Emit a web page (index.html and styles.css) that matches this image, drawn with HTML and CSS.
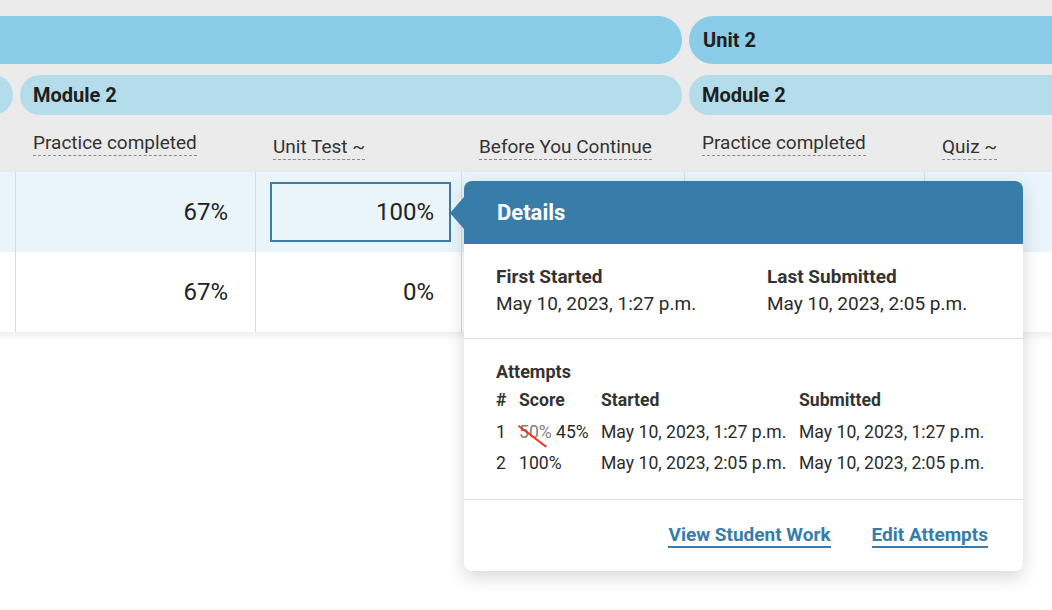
FILE: index.html
```html
<!doctype html>
<html>
<head>
<meta charset="utf-8">
<title>Gradebook</title>
<link rel="stylesheet" href="styles.css">
</head>
<body>
<div class="board">
  <div class="scroller">
    <div class="head">
      <div class="cols units">
        <div class="pill unit span-a"></div>
        <div class="pill unit span-b">Unit 2</div>
      </div>
      <div class="cols modules">
        <div class="pill module"></div>
        <div class="pill module span-m">Module 2</div>
        <div class="pill module span-b">Module 2</div>
      </div>
      <div class="cols labels">
        <div class="label"></div>
        <div class="label low"><span>Practice completed</span></div>
        <div class="label"><span>Unit Test ~</span></div>
        <div class="label"><span>Before You Continue</span></div>
        <div class="label low"><span>Practice completed</span></div>
        <div class="label"><span>Quiz ~</span></div>
      </div>
    </div>
    <div class="rows">
      <div class="cols row active">
        <div class="cell"></div>
        <div class="cell"><span class="score">67%</span></div>
        <div class="cell"><span class="score focus">100%</span></div>
        <div class="cell"></div>
        <div class="cell"></div>
        <div class="cell"></div>
      </div>
      <div class="cols row">
        <div class="cell"></div>
        <div class="cell"><span class="score">67%</span></div>
        <div class="cell"><span class="score">0%</span></div>
        <div class="cell"></div>
        <div class="cell"></div>
        <div class="cell"></div>
      </div>
    </div>
  </div>

  <div class="popover">
    <div class="pop-head">Details</div>
    <div class="pop-dates">
      <b>First Started</b>
      <b>Last Submitted</b>
      <span>May 10, 2023, 1:27 p.m.</span>
      <span>May 10, 2023, 2:05 p.m.</span>
    </div>
    <div class="pop-attempts">
      <div class="att-title">Attempts</div>
      <div class="att-grid">
        <b>#</b><b>Score</b><b>Started</b><b>Submitted</b>
        <span>1</span><span><s class="old">50%</s> 45%</span><span>May 10, 2023, 1:27 p.m.</span><span>May 10, 2023, 1:27 p.m.</span>
        <span>2</span><span>100%</span><span>May 10, 2023, 2:05 p.m.</span><span>May 10, 2023, 2:05 p.m.</span>
      </div>
    </div>
    <div class="pop-foot">
      <a href="#">View Student Work</a>
      <a href="#">Edit Attempts</a>
    </div>
  </div>
</div>
</body>
</html>
```

FILE: styles.css
```css
body{
margin:0;
background:#fff;
font-family:Roboto,"Liberation Sans",sans-serif;
color:#2b2b2b;
}
.board{
position:relative;
width:1052px;
height:610px;
overflow:hidden;
}
.scroller{
margin-left:-224px;
width:1400px;
}
.head{
background:#ebebeb;
padding-top:16px;
}
.cols{
display:grid;
grid-template-columns:240px 240px 206px 223px 240px 240px;
}
.pill{
display:flex;
align-items:center;
font-weight:700;
font-size:20px;
color:#1e1e1e;
margin:0 3px 0 4px;
}
.unit{
height:48px;
border-radius:24px;
background:#8bcce8;
padding-left:14px;
}
.span-a{
grid-column:1/5;
border-radius:0 24px 24px 0;
}
.span-b{
grid-column:5/7;
border-radius:24px 0 0 24px;
}
.modules{
margin-top:11px;
}
.module{
height:40px;
border-radius:20px;
background:#b5dcea;
padding-left:13px;
}
.span-m{
grid-column:2/5;
}
.labels{
height:57px;
}
.label{
display:flex;
align-items:flex-end;
padding:0 0 12px 17px;
font-size:19px;
color:#333;
}
.label.low{
padding-bottom:16px;
}
.label span{
border-bottom:1px dashed #8a8a8a;
line-height:22px;
padding-bottom:1px;
}
.rows{
box-shadow:0 4px 8px rgba(0,0,0,0.07);
}
.row{
height:80px;
background:#fff;
}
.row.active{
background:#eaf5fa;
}
.cell{
border-right:1px solid #dcdcdc;
padding:10px 10px 10px 14px;
display:flex;
}
.score{
flex:1;
display:flex;
align-items:center;
justify-content:flex-end;
padding-right:15px;
border:2px solid transparent;
font-size:24px;
color:#222;
}
.score.focus{
border-color:#387ca9;
}
.popover{
position:absolute;
left:464px;
top:181px;
width:559px;
background:#fff;
border-radius:8px;
box-shadow:0 6px 18px rgba(0,0,0,0.16);
}
.popover::before{
content:"";
position:absolute;
left:-14px;
top:16px;
border-right:14px solid #387ca9;
border-top:16px solid transparent;
border-bottom:16px solid transparent;
}
.pop-head{
height:63px;
background:#387ca9;
border-radius:8px 8px 0 0;
color:#fff;
font-size:22px;
font-weight:700;
display:flex;
align-items:center;
padding-left:33px;
}
.pop-dates{
display:grid;
grid-template-columns:271px 1fr;
padding:21px 32px 22px;
font-size:19px;
line-height:24px;
row-gap:3px;
border-bottom:1px solid #dcdcdc;
}
.pop-dates b,.att-grid b,.att-title{
font-weight:700;
color:#333;
}
.pop-attempts{
padding:21px 32px 19px;
border-bottom:1px solid #dcdcdc;
}
.att-title{
font-size:18px;
line-height:24px;
}
.att-grid{
display:grid;
grid-template-columns:23px 82px 198px auto;
font-size:17.6px;
margin-top:1px;
}
.att-grid > *{
height:31.5px;
line-height:31.5px;
}
.old{
position:relative;
text-decoration:none;
color:#808080;
}
.old::after{
content:"";
position:absolute;
left:0;
top:3px;
width:35px;
height:2px;
background:#e8382e;
transform:rotate(37deg);
transform-origin:0 0;
}
.pop-foot{
display:flex;
justify-content:flex-end;
gap:41px;
padding:23px 35px 23px;
}
.pop-foot a{
color:#387ca9;
font-weight:700;
font-size:19px;
line-height:23px;
text-decoration:none;
border-bottom:2px solid #387ca9;
}
```
